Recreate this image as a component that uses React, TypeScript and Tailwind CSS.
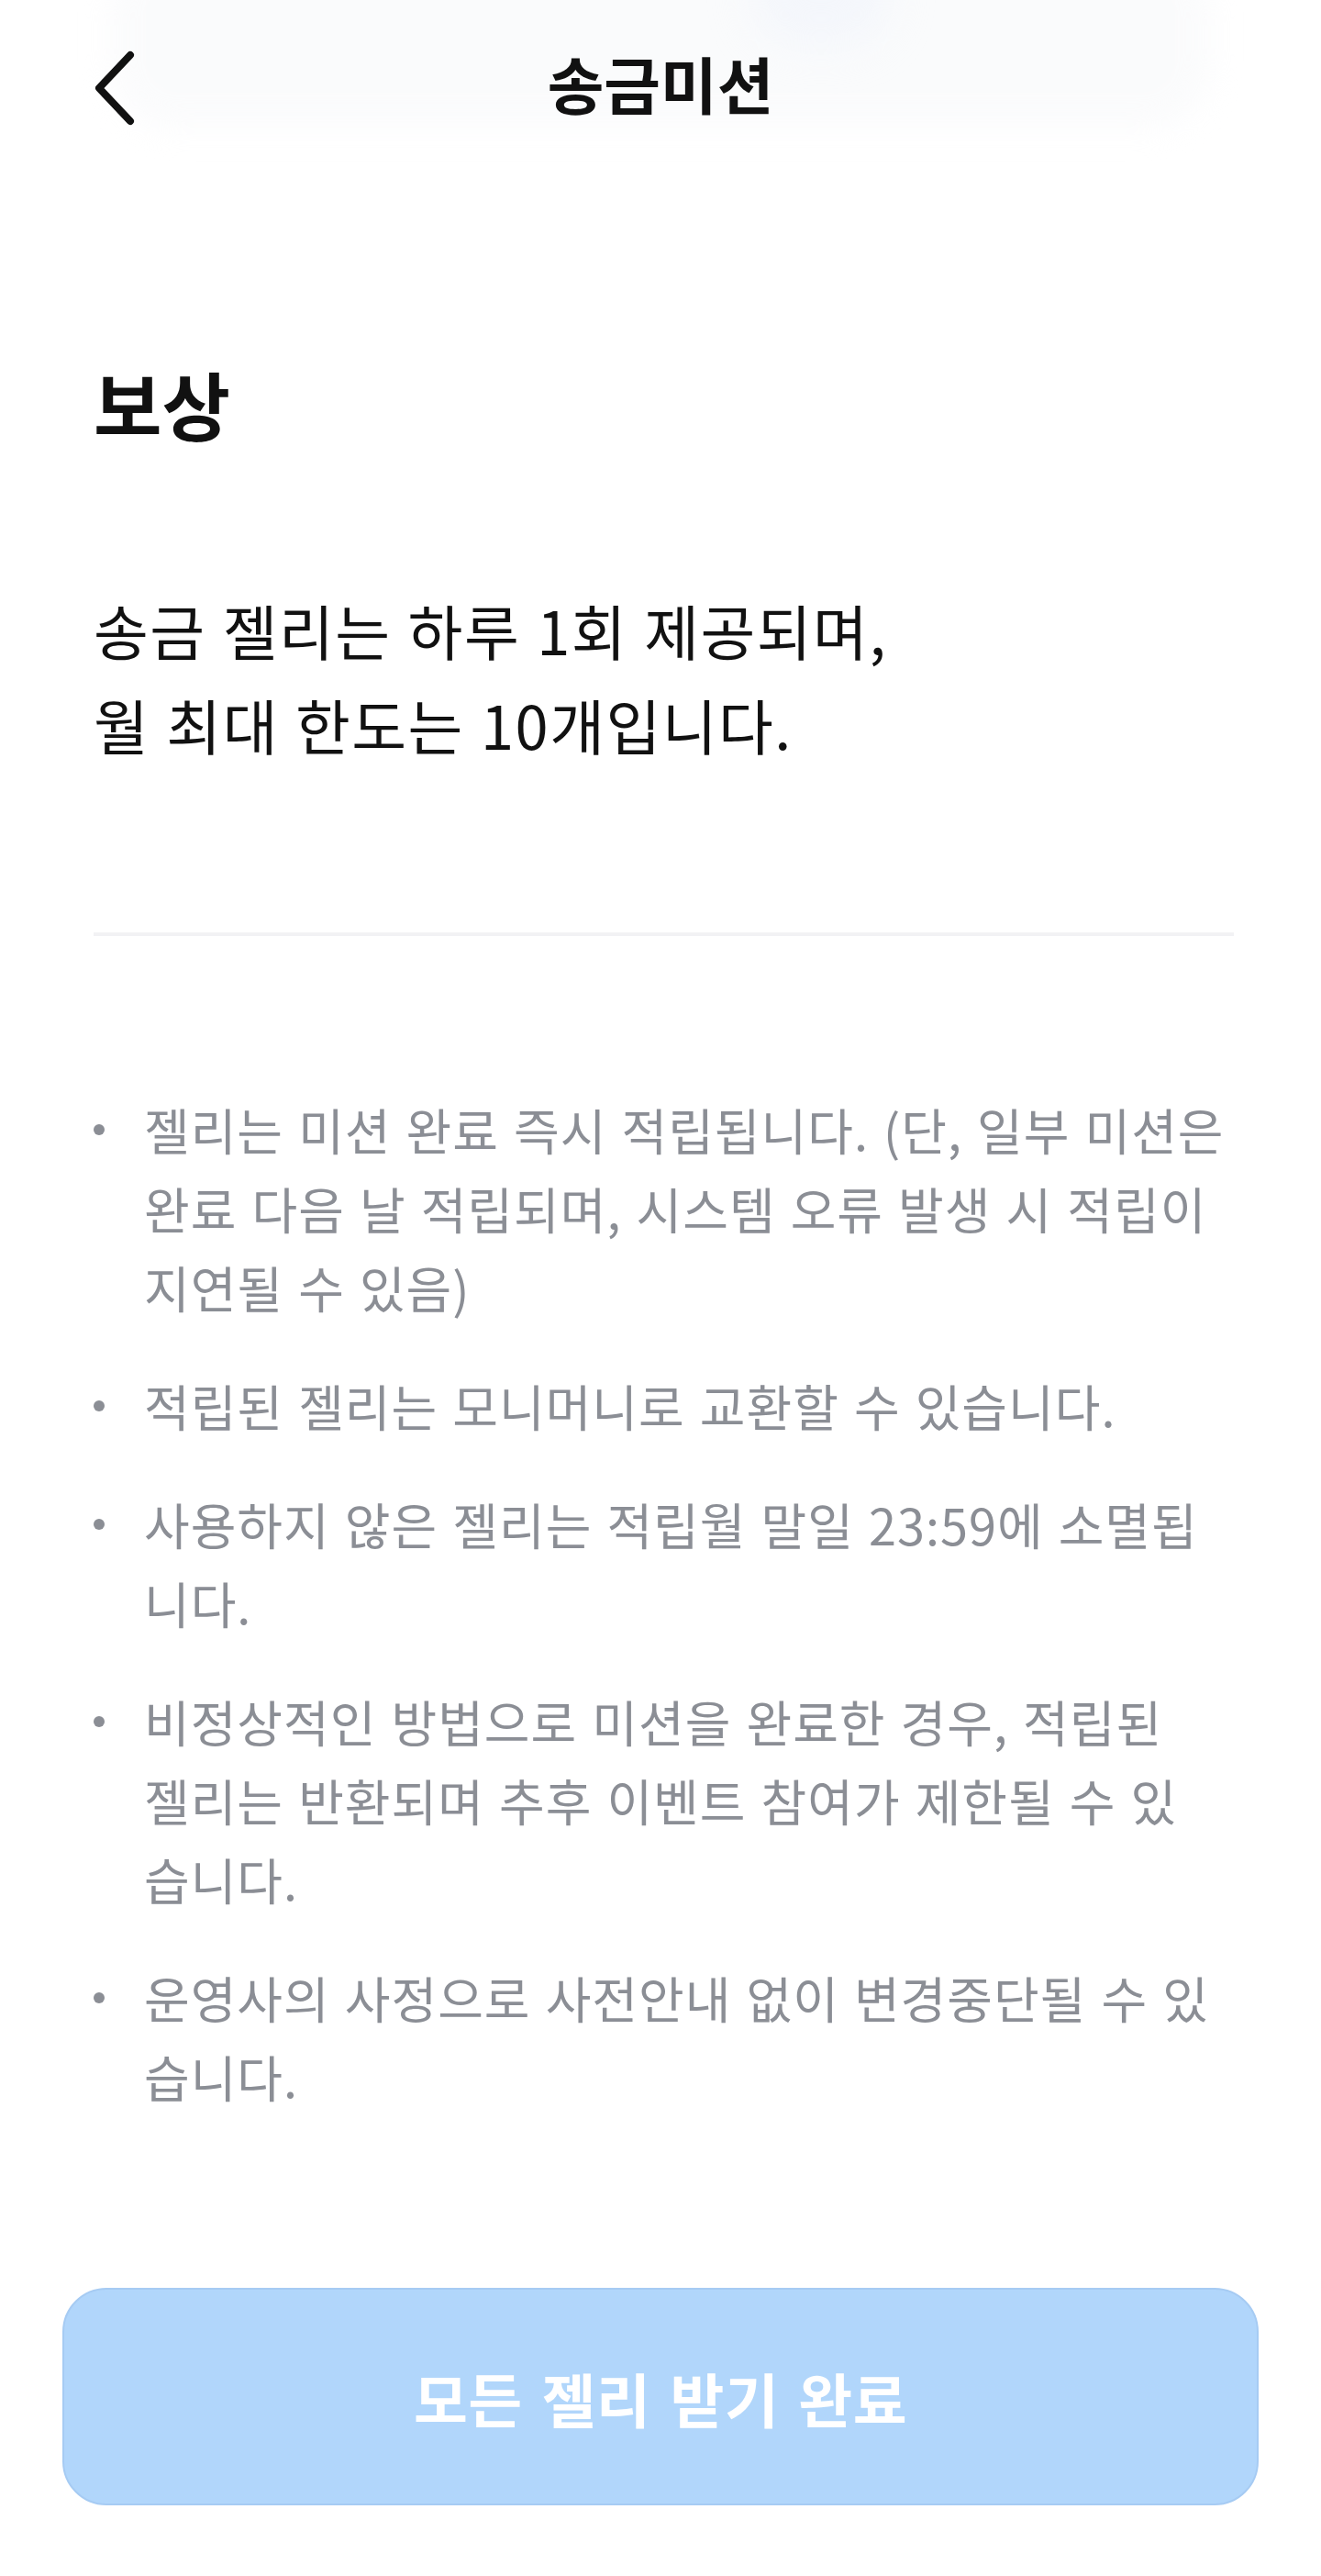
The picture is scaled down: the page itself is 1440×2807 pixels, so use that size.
const NOTICES: string[][] = [
  [
    "젤리는 미션 완료 즉시 적립됩니다. (단, 일부 미션은",
    "완료 다음 날 적립되며, 시스템 오류 발생 시 적립이",
    "지연될 수 있음)",
  ],
  ["적립된 젤리는 모니머니로 교환할 수 있습니다."],
  ["사용하지 않은 젤리는 적립월 말일 23:59에 소멸됩", "니다."],
  [
    "비정상적인 방법으로 미션을 완료한 경우, 적립된",
    "젤리는 반환되며 추후 이벤트 참여가 제한될 수 있",
    "습니다.",
  ],
  ["운영사의 사정으로 사전안내 없이 변경중단될 수 있", "습니다."],
];

function BackIcon() {
  return (
    <svg width="50" height="86" viewBox="0 0 50 86" fill="none" aria-hidden="true">
      <path
        d="M42 7 L8 43 L42 79"
        stroke="#111111"
        strokeWidth="8"
        strokeLinecap="round"
        strokeLinejoin="round"
      />
    </svg>
  );
}

export default function App() {
  return (
    <div className="relative min-h-[2807px] w-full overflow-hidden bg-white pb-[77px] font-['Noto_Sans_CJK_KR','Noto_Sans',sans-serif] text-[#111111]">
      {/* faint blurred toast behind the header */}
      <div className="pointer-events-none absolute left-[120px] right-[120px] top-[-60px] h-[200px] rounded-[70px] bg-[#f7f8fa] opacity-50 blur-lg" />
      <div className="pointer-events-none absolute left-[820px] top-[-60px] h-[110px] w-[150px] rounded-full bg-[#eef2fb] opacity-50 blur-xl" />

      <header className="relative grid h-[178px] grid-cols-[1fr_auto_1fr] items-center">
        <button type="button" aria-label="뒤로" className="mt-[13px] flex justify-self-start pl-[100px]">
          <BackIcon />
        </button>
        <h1 className="text-[67px] font-semibold leading-none tracking-[0px]">송금미션</h1>
        <div />
      </header>

      <main className="relative pl-[102px] pr-[95px]">
        <h2 className="mt-[213px] text-[81px] font-bold leading-[96px] tracking-[0px]">보상</h2>

        <p className="mt-[148px] text-[65px] leading-[103px] tracking-[1.5px] [word-spacing:2px]">
          송금 젤리는 하루 1회 제공되며,
          <br />월 최대 한도는 10개입니다.
        </p>

        <div className="mt-[175px] h-[4px] bg-[#f2f2f4]" />

        <ul className="mt-[168px] flex flex-col gap-[43px] text-[54px] leading-[86px] tracking-[1px] text-[#8b8e95] [word-spacing:3px]">
          {NOTICES.map((lines, index) => (
            <li key={index} className="flex">
              <span className="flex h-[86px] w-[55px] shrink-0 items-center">
                <span className="h-[12px] w-[12px] rounded-full bg-[#8b8e95]" />
              </span>
              <span className="whitespace-nowrap">
                {lines.map((line, lineIndex) => (
                  <span key={lineIndex} className="block">
                    {line}
                  </span>
                ))}
              </span>
            </li>
          ))}
        </ul>
      </main>

      <div className="relative mt-[187px] px-[68px]">
        <button
          type="button"
          disabled
          className="flex h-[237px] w-full items-center justify-center rounded-[48px] border-2 border-[#a6cbf3] bg-[#b1d6fb] text-[64px] font-bold tracking-[0.5px] text-white [word-spacing:6px]"
        >
          모든 젤리 받기 완료
        </button>
      </div>
    </div>
  );
}
